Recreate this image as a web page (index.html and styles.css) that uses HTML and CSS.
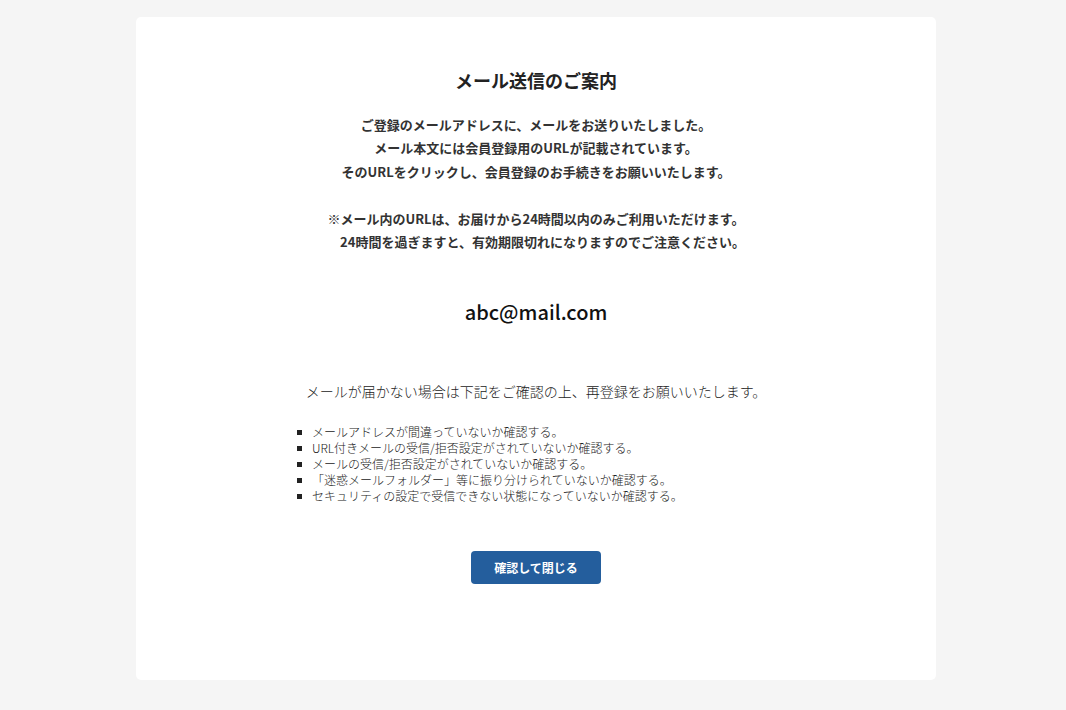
FILE: index.html
```html
<!DOCTYPE html>
<html lang="ja">
<head>
<meta charset="utf-8">
<title>メール送信のご案内</title>
<link rel="stylesheet" href="styles.css">
</head>
<body>
<main class="card">
  <h1 class="title">メール送信のご案内</h1>
  <p class="lead">ご登録のメールアドレスに、メールをお送りいたしました。<br>メール本文には会員登録用のURLが記載されています。<br>そのURLをクリックし、会員登録のお手続きをお願いいたします。<br><br>※メール内のURLは、お届けから24時間以内のみご利用いただけます。<br>　24時間を過ぎますと、有効期限切れになりますのでご注意ください。</p>
  <p class="email">abc@mail.com</p>
  <p class="note">メールが届かない場合は下記をご確認の上、再登録をお願いいたします。</p>
  <ul class="checks">
    <li>メールアドレスが間違っていないか確認する。</li>
    <li>URL付きメールの受信/拒否設定がされていないか確認する。</li>
    <li>メールの受信/拒否設定がされていないか確認する。</li>
    <li>「迷惑メールフォルダー」等に振り分けられていないか確認する。</li>
    <li>セキュリティの設定で受信できない状態になっていないか確認する。</li>
  </ul>
  <div class="actions"><button class="btn" type="button">確認して閉じる</button></div>
</main>
</body>
</html>
```
FILE: styles.css
```css
html, body {
  margin: 0;
  padding: 0;
  background: #f5f5f5;
}
body {
  font-family: "Noto Sans CJK JP", "Noto Sans", sans-serif;
  color: #333;
  padding: 17px 0 30px 136px;
}
.card {
  width: 800px;
  height: 663px;
  box-sizing: border-box;
  background: #fff;
  border-radius: 5px;
  padding-top: 50px;
  text-align: center;
}
.title {
  margin: 0;
  font-size: 18px;
  line-height: 27px;
  font-weight: 700;
  color: #222;
}
.lead {
  margin: 19px 0 0;
  font-size: 13px;
  line-height: 23.4px;
  font-weight: 700;
  color: #333;
}
.email {
  margin: 44px 0 0;
  font-size: 20px;
  line-height: 30px;
  font-weight: 500;
  color: #111;
}
.note {
  margin: 54px 0 0;
  font-size: 14px;
  line-height: 21px;
  font-weight: 300;
  color: #222;
}
.checks {
  list-style: none;
  margin: 22px 0 0 176px;
  padding: 0;
  text-align: left;
  font-size: 12px;
  line-height: 16px;
  font-weight: 300;
  color: #222;
}
.checks li {
  position: relative;
}
.checks li::before {
  content: "";
  position: absolute;
  left: -15px;
  top: 6px;
  width: 5px;
  height: 5px;
  background: #222;
}
.actions {
  margin-top: 47px;
  display: flex;
  justify-content: center;
}
.btn {
  width: 130px;
  height: 33px;
  border: 0;
  border-radius: 4px;
  background: #245e9d;
  color: #fff;
  font-family: inherit;
  font-size: 12px;
  font-weight: 700;
  cursor: pointer;
}
```
